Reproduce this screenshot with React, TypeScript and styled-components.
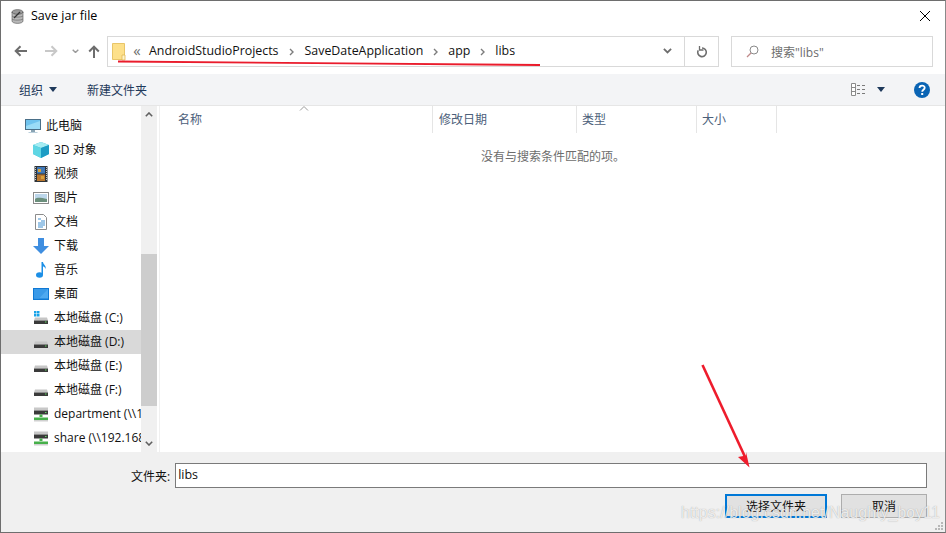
import React from 'react';
import styled, { createGlobalStyle } from 'styled-components';

const GlobalStyle = createGlobalStyle`
  *, *::before, *::after {
    box-sizing: border-box;
  }
  html, body {
    margin: 0;
    padding: 0;
    background: #fff;
  }
  body {
    font-family: 'Open Sans', 'Noto Sans CJK SC', sans-serif;
    font-size: 12px;
    color: #000;
    overflow: hidden;
  }
`;

const cjk = `'Open Sans', 'Noto Sans CJK SC', sans-serif`;

const Window = styled.div`
  position: relative;
  width: 946px;
  height: 533px;
  border: 1px solid #6e6e6e;
  border-right-color: #8a8a8a;
  display: flex;
  flex-direction: column;
  overflow: hidden;
  background: #fff;
`;

const TitleBar = styled.div`
  height: 32px;
  display: flex;
  align-items: center;
  padding: 0 15px 2px 10px;
  gap: 7px;
  flex: none;
`;

const Title = styled.span`
  flex: 1;
  font-size: 12.5px;
  color: #000;
  padding-bottom: 2px;
`;

const NavBar = styled.div`
  height: 41px;
  flex: none;
  display: flex;
  align-items: flex-start;
  padding: 3px 12px 0 13px;
`;

const NavIcons = styled.div`
  width: 93px;
  height: 30px;
  display: flex;
  align-items: center;
  flex: none;
`;

const NavSlot = styled.div<{ $w: number }>`
  width: ${p => p.$w}px;
  display: flex;
  align-items: center;
  flex: none;
`;

const AddressBox = styled.div`
  width: 612px;
  height: 31px;
  border: 1px solid #d9d9d9;
  display: flex;
  align-items: center;
  flex: none;
  padding-left: 4px;
`;

const Crumbs = styled.div`
  flex: 1;
  display: flex;
  align-items: center;
  min-width: 0;
`;

const Crumb = styled.span`
  font-size: 12.4px;
  color: #111;
  padding-bottom: 3px;
`;

const FirstCrumb = styled(Crumb)`
  margin-left: 1px;
`;

const CrumbSep = styled.span<{ $w?: number }>`
  width: ${p => p.$w ?? 25}px;
  display: flex;
  justify-content: center;
  flex: none;
  color: #6d6d6d;
`;

const Overflow = styled(CrumbSep)`
  font-size: 15px;
  padding-bottom: 3px;
`;

const AddressBtn = styled.div<{ $line?: boolean }>`
  width: 34px;
  height: 100%;
  display: flex;
  align-items: center;
  justify-content: center;
  flex: none;
  border-left: ${p => (p.$line ? '1px solid #d9d9d9' : 'none')};
`;

const SearchBox = styled.div`
  width: 202px;
  height: 31px;
  margin-left: 12px;
  border: 1px solid #d9d9d9;
  display: flex;
  align-items: center;
  gap: 12px;
  padding-left: 14px;
  font-size: 12px;
  color: #6d6d6d;
  flex: none;
`;

const ToolBar = styled.div`
  height: 32px;
  flex: none;
  background: #f3f4f6;
  border-bottom: 1px solid #e6e6e6;
  display: flex;
  align-items: center;
  padding: 0 15px 0 18px;
  color: #1e395b;
  font-size: 12px;
`;

const ToolItem = styled.span`
  display: flex;
  align-items: center;
  gap: 6px;
`;

const NewFolder = styled(ToolItem)`
  margin-left: 30px;
  flex: 1;
`;

const ViewBtn = styled.span`
  display: flex;
  align-items: center;
  gap: 10px;
  margin-right: 29px;
`;

const Body = styled.div`
  flex: 1;
  min-height: 0;
  display: flex;
`;

const Sidebar = styled.div`
  width: 140px;
  flex: none;
  padding-top: 8px;
  overflow: hidden;
`;

const TreeRow = styled.div<{ $active?: boolean; $top?: boolean }>`
  height: 24px;
  display: flex;
  align-items: center;
  gap: 5px;
  padding-left: ${p => (p.$top ? 24 : 32)}px;
  background: ${p => (p.$active ? '#d9d9d9' : 'transparent')};
  font-size: 12px;
  color: #111;
  white-space: nowrap;
  overflow: hidden;
`;

const TreeIcon = styled.span`
  width: 16px;
  height: 16px;
  flex: none;
  display: flex;
`;

const TreeLabel = styled.span`
  padding-bottom: 2px;
`;

const ScrollBar = styled.div`
  width: 16px;
  flex: none;
  background: #f0f0f0;
  display: flex;
  flex-direction: column;
`;

const ScrollBtn = styled.div<{ $flip?: boolean }>`
  height: 17px;
  flex: none;
  display: flex;
  align-items: center;
  justify-content: center;
  transform: ${p => (p.$flip ? 'scaleY(-1)' : 'none')};
`;

const ScrollSpace = styled.div<{ $h: number }>`
  height: ${p => p.$h}px;
  flex: none;
`;

const ScrollThumb = styled.div`
  flex: 1;
  background: #cdcdcd;
`;

const Pane = styled.div`
  flex: 1;
  margin-left: 2px;
  border-left: 1px solid #f0f0f0;
  display: flex;
  flex-direction: column;
  min-width: 0;
`;

const Header = styled.div`
  position: relative;
  height: 27px;
  flex: none;
  display: flex;
`;

const HeaderCell = styled.div<{ $w: number; $pad: number }>`
  width: ${p => p.$w}px;
  flex: none;
  padding: 0 0 1px ${p => p.$pad}px;
  display: flex;
  align-items: center;
  border-right: 1px solid #e5e5e5;
  color: #4c607a;
  font-size: 12px;
`;

const SortCaret = styled.svg`
  position: absolute;
  left: 139px;
  top: 0;
`;

const EmptyText = styled.div`
  margin-top: 16px;
  padding-left: 321px;
  color: #6d6d6d;
  font-size: 12px;
  line-height: 16px;
`;

const Footer = styled.div`
  height: 80px;
  flex: none;
  background: #f0f0f0;
  display: flex;
  flex-direction: column;
  padding: 11px 18px 0 130px;
`;

const NameRow = styled.div`
  display: flex;
  align-items: center;
  gap: 5px;
`;

const NameLabel = styled.label`
  font-size: 12px;
  color: #111;
`;

const NameInput = styled.div`
  flex: 1;
  height: 25px;
  border: 1px solid #7a7a7a;
  background: #fff;
  padding: 0 3px 3px 2px;
  display: flex;
  align-items: center;
  font-size: 12.5px;
  color: #111;
`;

const ButtonRow = styled.div`
  display: flex;
  justify-content: flex-end;
  gap: 14px;
  margin-top: 6px;
`;

const DialogButton = styled.button<{ $primary?: boolean; $w: number }>`
  width: ${p => p.$w}px;
  height: 24px;
  padding: 0;
  background: #e1e1e1;
  border: ${p => (p.$primary ? '2px solid #0078d7' : '1px solid #adadad')};
  font-family: ${cjk};
  font-size: 12px;
  color: #111;
`;

const Grip = styled.svg`
  position: absolute;
  right: 1px;
  bottom: 1px;
`;

const Watermark = styled.div`
  position: absolute;
  left: 680px;
  top: 502px;
  font-family: 'Liberation Sans', sans-serif;
  font-size: 15.8px;
  line-height: 20px;
  letter-spacing: 0.1px;
  color: rgba(255, 255, 255, 0.8);
  text-shadow: 0 0 1px rgba(120, 120, 120, 0.7);
  white-space: nowrap;
`;

const Annotations = styled.svg`
  position: absolute;
  left: -1px;
  top: -1px;
  pointer-events: none;
`;

const FolderGlyph = () => (
  <svg width="14" height="18" viewBox="0 0 14 18">
    <path d="M.5.5h12v16H.5z" fill="#fde08a" stroke="#e8c568" />
    <path d="M10 12h3v5h-3z" fill="#fff3c8" stroke="#e0b850" strokeWidth=".8" />
  </svg>
);

const ArrowLeft = ({ color }: { color: string }) => (
  <svg width="14" height="12" viewBox="0 0 14 12">
    <path d="M13 6H2M6.5 1.2 1.7 6l4.8 4.8" fill="none" stroke={color} strokeWidth="2" />
  </svg>
);

const ArrowRight = ({ color }: { color: string }) => (
  <svg width="14" height="12" viewBox="0 0 14 12">
    <path d="M1 6h11M7.5 1.2 12.3 6l-4.8 4.8" fill="none" stroke={color} strokeWidth="2" />
  </svg>
);

const ArrowUp = () => (
  <svg width="12" height="13" viewBox="0 0 12 13">
    <path d="M6 13V2M1.2 6.5 6 1.7l4.8 4.8" fill="none" stroke="#6d6d6d" strokeWidth="2" />
  </svg>
);

const Chevron = ({ color = '#7a7a7a', w = 7 }: { color?: string; w?: number }) => (
  <svg width={w} height={w * 0.7} viewBox="0 0 10 7">
    <path d="M1 1l4 4 4-4" fill="none" stroke={color} strokeWidth="2" />
  </svg>
);

const SepGlyph = () => (
  <svg width="5" height="8" viewBox="0 0 5 8">
    <path d="M1 1l3 3-3 3" fill="none" stroke="#7c7c7c" strokeWidth="1.4" />
  </svg>
);

const Caret = ({ color = '#1e395b' }: { color?: string }) => (
  <svg width="8" height="5" viewBox="0 0 8 5">
    <path d="M0 0h8L4 5z" fill={color} />
  </svg>
);

const DbIcon = () => (
  <svg width="13" height="15" viewBox="0 0 13 15">
    <ellipse cx="6.5" cy="3" rx="5.5" ry="2.4" fill="#9a9a9a" stroke="#555" strokeWidth=".6" />
    <path d="M1 3v9c0 1.4 2.5 2.4 5.5 2.4S12 13.400 12 12V3c0 1.400-2.500 2.400-5.500 2.400S1 4.400 1 3z" fill="#b8b8b8" stroke="#555" strokeWidth=".6" />
    <path d="M1 7c1 1.500 9 1.500 11 0M1 10c1 1.500 9 1.500 11 0" fill="none" stroke="#6a6a6a" strokeWidth=".7" />
    <path d="M3 9l6-6" stroke="#333" strokeWidth="1.200" />
  </svg>
);

const PcIcon = () => (
  <svg width="16" height="16" viewBox="0 0 16 16">
    <rect x=".5" y="1.500" width="15" height="10" fill="#6fc3ee" stroke="#4a6f88" />
    <path d="M1 8 15 3v8H1z" fill="#9adcf7" />
    <path d="M6 12h4v2H6z" fill="#8aa4b4" />
    <path d="M3.500 14h9v1h-9z" fill="#bcd0dc" />
  </svg>
);

const CubeIcon = () => (
  <svg width="16" height="16" viewBox="0 0 16 16">
    <path d="M8 0l8 3v9l-8 4-8-4V3z" fill="#39b8d6" />
    <path d="M8 0l8 3-8 3-8-3z" fill="#a5ecf2" />
    <path d="M8 6l8-3v9l-8 4z" fill="#1d9cc4" />
    <path d="M0 3l8 3v10l-8-4z" fill="#5fd6e4" />
  </svg>
);

const VideoIcon = () => (
  <svg width="16" height="16" viewBox="0 0 16 16">
    <rect x="1.500" width="13" height="16" fill="#2f3438" />
    <path d="M2.500 1v14M13.500 1v14" stroke="#c8c8c8" strokeWidth="1" strokeDasharray="1 1" />
    <rect x="4" y="1" width="8" height="6.500" fill="#3f78b8" />
    <rect x="4" y="8.500" width="8" height="6.500" fill="#b9772e" />
    <path d="M5 3h3v3H5zM8 10h3v3H8z" fill="#d9a23a" />
  </svg>
);

const PictureIcon = () => (
  <svg width="16" height="16" viewBox="0 0 16 16">
    <rect x=".5" y="2.500" width="15" height="11" fill="#fff" stroke="#8a8a8a" />
    <rect x="2" y="4" width="12" height="8" fill="#bcd6ea" />
    <path d="M2 9c3-2 6-1 12 0v3H2z" fill="#6b8f7c" />
  </svg>
);

const DocIcon = () => (
  <svg width="16" height="16" viewBox="0 0 16 16">
    <path d="M2.500.5h8l3 3v12h-11z" fill="#fff" stroke="#8c8c8c" />
    <path d="M5 5h3M8 7h4M5 9h7M5 11h7M5 13h5" stroke="#3f8fd0" strokeWidth="1" />
  </svg>
);

const DownloadIcon = () => (
  <svg width="16" height="16" viewBox="0 0 16 16">
    <path d="M5 0h6v8h5l-8 8-8-8h5z" fill="#3f8ee0" />
  </svg>
);

const MusicIcon = () => (
  <svg width="16" height="16" viewBox="0 0 16 16">
    <ellipse cx="6.500" cy="13" rx="3.500" ry="2.800" fill="#1c8fe6" />
    <path d="M8.500 0h1.500c.3 3 3.500 3.500 2.500 7-.5-2-2-2.500-2.500-2.500V13H8.500z" fill="#1c8fe6" />
  </svg>
);

const DesktopIcon = () => (
  <svg width="16" height="16" viewBox="0 0 16 16">
    <rect y="2" width="16" height="12" fill="#0f78d4" />
    <rect x="1" y="3" width="14" height="9.500" fill="#4ea9f0" />
    <path d="M1 3h14L6 12.500H1z" fill="#3a9ae8" />
  </svg>
);

const DriveIcon = ({ win }: { win?: boolean }) => (
  <svg width="16" height="16" viewBox="0 0 16 16">
    {win && <path d="M1 1h2.500v2.500H1zM4 1h2.500v2.500H4zM1 4h2.500v2.500H1zM4 4h2.500v2.500H4z" fill="#19a3e8" />}
    <path d="M2 7.500h12l1 3H1z" fill="#c6c6c6" />
    <rect x="1" y="10.500" width="14" height="3.500" fill="#3a3a3a" />
    <rect x="12" y="11.500" width="1.500" height="1" fill="#5fdc5f" />
  </svg>
);

const NetDriveIcon = () => (
  <svg width="16" height="16" viewBox="0 0 16 16">
    <rect x="1" y="1.500" width="14" height="3" fill="#c8c8c8" />
    <rect x="1" y="4.500" width="14" height="4" fill="#3a3a3a" />
    <rect x="12" y="6" width="1.500" height="1" fill="#5fdc5f" />
    <path d="M6.500 8.500h3V11h-3z" fill="#46b04a" />
    <rect x="1" y="11.500" width="14" height="2.500" fill="#46b04a" />
    <rect x="1" y="14" width="14" height="1.500" fill="#d0d0d0" />
  </svg>
);

const tree: { label: string; icon: React.ReactNode; top?: boolean; active?: boolean }[] = [
  { label: '此电脑', icon: <PcIcon />, top: true },
  { label: '3D 对象', icon: <CubeIcon /> },
  { label: '视频', icon: <VideoIcon /> },
  { label: '图片', icon: <PictureIcon /> },
  { label: '文档', icon: <DocIcon /> },
  { label: '下载', icon: <DownloadIcon /> },
  { label: '音乐', icon: <MusicIcon /> },
  { label: '桌面', icon: <DesktopIcon /> },
  { label: '本地磁盘 (C:)', icon: <DriveIcon win /> },
  { label: '本地磁盘 (D:)', icon: <DriveIcon />, active: true },
  { label: '本地磁盘 (E:)', icon: <DriveIcon /> },
  { label: '本地磁盘 (F:)', icon: <DriveIcon /> },
  { label: 'department (\\\\192.168.1.10)', icon: <NetDriveIcon /> },
  { label: 'share (\\\\192.168.1.10)', icon: <NetDriveIcon /> },
];

const crumbs = ['SaveDateApplication', 'app', 'libs'];

const App: React.FC = () => {
  return (
    <Window>
      <GlobalStyle />
      <TitleBar>
        <DbIcon />
        <Title>Save jar file</Title>
        <svg width="10" height="10" viewBox="0 0 10 10">
          <path d="M0 0l10 10M10 0 0 10" stroke="#000" strokeWidth="1" />
        </svg>
      </TitleBar>

      <NavBar>
        <NavIcons>
          <NavSlot $w={30}><ArrowLeft color="#6d6d6d" /></NavSlot>
          <NavSlot $w={28}><ArrowRight color="#c8c8c8" /></NavSlot>
          <NavSlot $w={16}><Chevron color="#9a9a9a" /></NavSlot>
          <NavSlot $w={19}><ArrowUp /></NavSlot>
        </NavIcons>
        <AddressBox>
          <FolderGlyph />
          <Crumbs>
            <Overflow $w={22}>«</Overflow>
            <FirstCrumb>AndroidStudioProjects</FirstCrumb>
            {crumbs.map((c, i) => (
              <React.Fragment key={c}>
                <CrumbSep $w={i === 0 ? 26 : 25}><SepGlyph /></CrumbSep>
                <Crumb>{c}</Crumb>
              </React.Fragment>
            ))}
          </Crumbs>
          <AddressBtn><Chevron color="#6d6d6d" w={9} /></AddressBtn>
          <AddressBtn $line>
            <svg width="12" height="12" viewBox="0 0 12 12">
              <path d="M6 2a4.300 4.300 0 1 1-3.800 2.300" fill="none" stroke="#6d6d6d" strokeWidth="1.600" />
              <path d="M3.500 0v4h4" fill="none" stroke="#6d6d6d" strokeWidth="1.300" />
            </svg>
          </AddressBtn>
        </AddressBox>
        <SearchBox>
          <svg width="13" height="13" viewBox="0 0 13 13">
            <circle cx="8" cy="5" r="4" fill="none" stroke="#8a8a8a" />
            <path d="M5 8l-4 4" stroke="#c08a8a" strokeWidth="1.200" />
          </svg>
          搜索"libs"
        </SearchBox>
      </NavBar>

      <ToolBar>
        <ToolItem>组织 <Caret /></ToolItem>
        <NewFolder>新建文件夹</NewFolder>
        <ViewBtn>
          <svg width="16" height="13" viewBox="0 0 16 13">
            <path d="M.5.500h4v12h-4zM.5 4.500h4M.5 8.500h4" fill="#fff" stroke="#8a8a8a" />
            <path d="M6 2.500h3M11 2.500h3M6 6.500h3M11 6.500h3M6 10.500h3M11 10.500h3" stroke="#7a7a7a" />
          </svg>
          <Caret />
        </ViewBtn>
        <svg width="16" height="16" viewBox="0 0 16 16">
          <circle cx="8" cy="8" r="8" fill="#0a64b4" />
          <path d="M5.500 6c0-3.200 5.200-3.200 5.200-.2 0 2-2.500 2-2.500 4" fill="none" stroke="#fff" strokeWidth="1.800" />
          <rect x="7.200" y="11" width="2" height="2" fill="#fff" />
        </svg>
      </ToolBar>

      <Body>
        <Sidebar>
          {tree.map(t => (
            <TreeRow key={t.label} $top={t.top} $active={t.active}>
              <TreeIcon>{t.icon}</TreeIcon>
              <TreeLabel>{t.label}</TreeLabel>
            </TreeRow>
          ))}
        </Sidebar>
        <ScrollBar>
          <ScrollBtn $flip><Chevron color="#606060" w={8} /></ScrollBtn>
          <ScrollSpace $h={131} />
          <ScrollThumb />
          <ScrollSpace $h={29} />
          <ScrollBtn><Chevron color="#606060" w={8} /></ScrollBtn>
        </ScrollBar>
        <Pane>
          <Header>
            <SortCaret width="10" height="5" viewBox="0 0 10 5">
              <path d="M1 4.500l4-4 4 4" fill="none" stroke="#9a9a9a" />
            </SortCaret>
            <HeaderCell $w={273} $pad={18}>名称</HeaderCell>
            <HeaderCell $w={144} $pad={6}>修改日期</HeaderCell>
            <HeaderCell $w={120} $pad={5}>类型</HeaderCell>
            <HeaderCell $w={80} $pad={5}>大小</HeaderCell>
          </Header>
          <EmptyText>没有与搜索条件匹配的项。</EmptyText>
        </Pane>
      </Body>

      <Footer>
        <NameRow>
          <NameLabel>文件夹:</NameLabel>
          <NameInput>libs</NameInput>
        </NameRow>
        <ButtonRow>
          <DialogButton $primary $w={102}>选择文件夹</DialogButton>
          <DialogButton $w={86}>取消</DialogButton>
        </ButtonRow>
      </Footer>

      <Grip width="9" height="9" viewBox="0 0 9 9">
        <path d="M6 0h2v2H6zM3 3h2v2H3zM6 3h2v2H6zM0 6h2v2H0zM3 6h2v2H3zM6 6h2v2H6z" fill="#b8b8b8" />
      </Grip>
      <Watermark>https://blog.csdn.net/Naughty_boy11</Watermark>
      <Annotations width="946" height="533" viewBox="0 0 946 533">
        <path d="M118 61.500C220 62.500 420 64 540 65" fill="none" stroke="#ea1c2c" strokeWidth="1.800" />
        <path d="M702.500 365 746 459" fill="none" stroke="#ee1c2c" strokeWidth="2.600" />
        <path d="M749.500 467.500 738 457l8-1.500 0-3.500z" fill="#ee1c2c" />
      </Annotations>
    </Window>
  );
};

export default App;
